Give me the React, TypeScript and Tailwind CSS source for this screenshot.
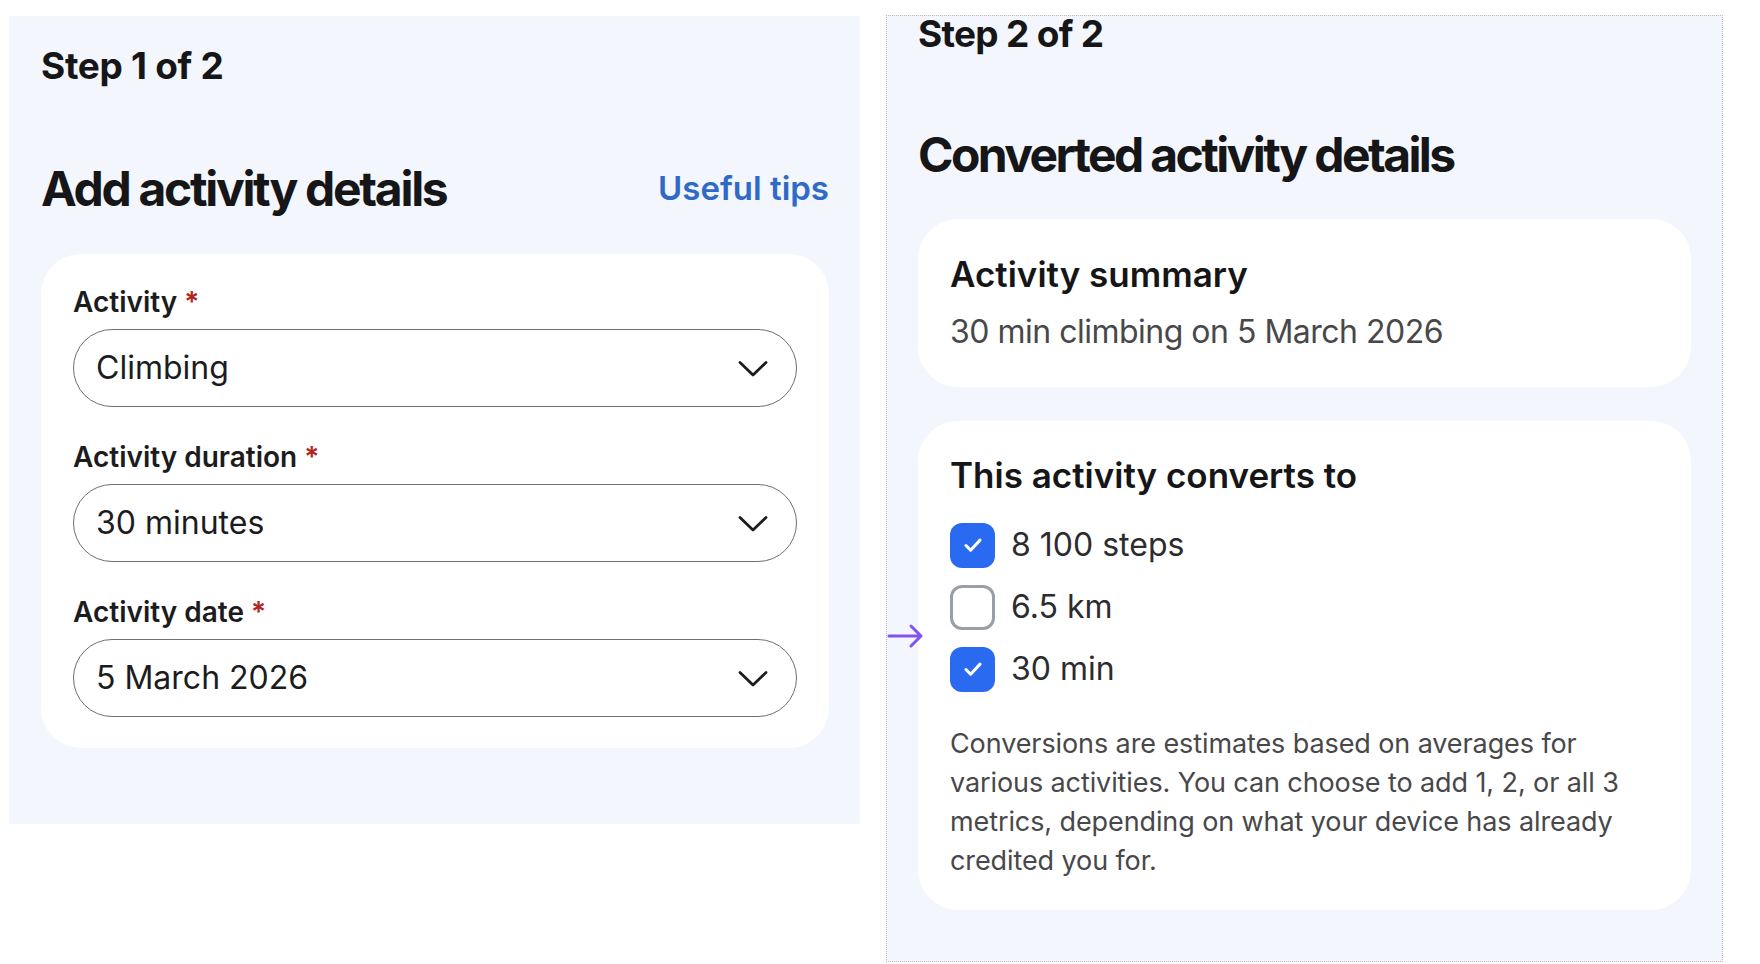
const font = { fontFamily: 'Inter, "Liberation Sans", sans-serif' };

function Chevron() {
    return (
        <svg width="32" height="19" viewBox="0 0 32 19" fill="none" stroke="#1c1c1e" strokeWidth="2.8" strokeLinecap="round" strokeLinejoin="round">
            <path d="M3 3.5L16 16L29 3.5" />
        </svg>
    );
}

function Field({ label, value }: { label: string; value: string }) {
    return (
        <div className="flex flex-col">
            <div className="text-[28px] leading-[34px] font-semibold text-[#1c1c1e] mb-[10px]">
                {label} <span className="text-[#b3261e]">*</span>
            </div>
            <div className="h-[78px] rounded-full border-[1.5px] border-[#6e6e73] bg-white flex items-center justify-between pl-[22px] pr-[27px]">
                <span className="text-[32px] text-[#1c1c1e]">{value}</span>
                <Chevron />
            </div>
        </div>
    );
}

function Check({ checked, label }: { checked: boolean; label: string }) {
    return (
        <div className="h-[62px] flex items-center gap-[16px]">
            {checked ? (
                <div className="w-[45px] h-[45px] rounded-[12px] bg-[#2a6af0] flex items-center justify-center">
                    <svg width="26" height="26" viewBox="0 0 24 24" fill="none" stroke="white" strokeWidth="2.8" strokeLinecap="round" strokeLinejoin="round">
                        <path d="M5.5 12.5l4.3 4.3L18.5 7.5" />
                    </svg>
                </div>
            ) : (
                <div className="w-[45px] h-[45px] rounded-[12px] border-[3px] border-[#9a9ea6] bg-white" />
            )}
            <span className="text-[32px] text-[#2c2c2e]">{label}</span>
        </div>
    );
}

export default function App() {
    return (
        <div className="w-[1760px] h-[964px] bg-white flex items-start" style={font}>
            {/* Step 1 */}
            <div className="ml-[9px] mt-[16px] w-[851px] h-[808px] bg-[#f3f6fc] pl-[32px] pr-[31px] pt-[28px] flex flex-col">
                <div className="text-[37px] leading-[44px] font-bold text-[#161618] tracking-[-0.3px]">Step 1 of 2</div>
                <div className="mt-[73px] flex items-center justify-between">
                    <h1 className="text-[48px] leading-[56px] font-bold text-[#161618] tracking-[-2.3px]">Add activity details</h1>
                    <a className="text-[33px] font-semibold text-[#2f6bc6]">Useful tips</a>
                </div>
                <div className="mt-[37px] bg-white rounded-[40px] px-[32px] pt-[31px] pb-[31px] flex flex-col gap-[33px]">
                    <Field label="Activity" value="Climbing" />
                    <Field label="Activity duration" value="30 minutes" />
                    <Field label="Activity date" value="5 March 2026" />
                </div>
            </div>

            {/* Step 2 */}
            <div className="relative ml-[26px] mt-[15px] w-[837px] h-[947px] bg-[#f3f6fc] border border-dotted border-[#b8bcc4] pl-[31px] pr-[31px] flex flex-col">
                <div className="text-[37px] leading-[36px] font-bold text-[#161618] tracking-[-0.7px]">Step 2 of 2</div>
                <h2 className="mt-[75px] text-[48px] leading-[56px] font-bold text-[#161618] tracking-[-2.6px]">Converted activity details</h2>

                <div className="mt-[36px] bg-white rounded-[40px] px-[32px] pt-[34px] pb-[35px]">
                    <div className="text-[35px] leading-[42px] font-semibold text-[#161618]">Activity summary</div>
                    <div className="mt-[17px] text-[32px] leading-[40px] text-[#48484a] tracking-[-0.5px]">30 min climbing on 5 March 2026</div>
                </div>

                <div className="mt-[34px] bg-white rounded-[40px] px-[32px] pt-[33px] pb-[30px]">
                    <div className="text-[35px] leading-[42px] font-semibold text-[#161618]">This activity converts to</div>
                    <div className="mt-[18px] flex flex-col">
                        <Check checked label="8 100 steps" />
                        <Check checked={false} label="6.5 km" />
                        <Check checked label="30 min" />
                    </div>
                    <p className="mt-[24px] text-[27px] leading-[39px] text-[#48484a] tracking-[-0.1px]">
                        Conversions are estimates based on averages for various activities. You can choose to add 1, 2, or all 3 metrics, depending on what your device has already credited you for.
                    </p>
                </div>

                {/* pointer arrow */}
                <svg className="absolute left-0 top-[606px]" width="38" height="28" viewBox="0 0 38 28" fill="none" stroke="#8452f0" strokeWidth="3" strokeLinecap="round" strokeLinejoin="round">
                    <path d="M2 14h32M24 4l10 10-10 10" />
                </svg>
            </div>
        </div>
    );
}
